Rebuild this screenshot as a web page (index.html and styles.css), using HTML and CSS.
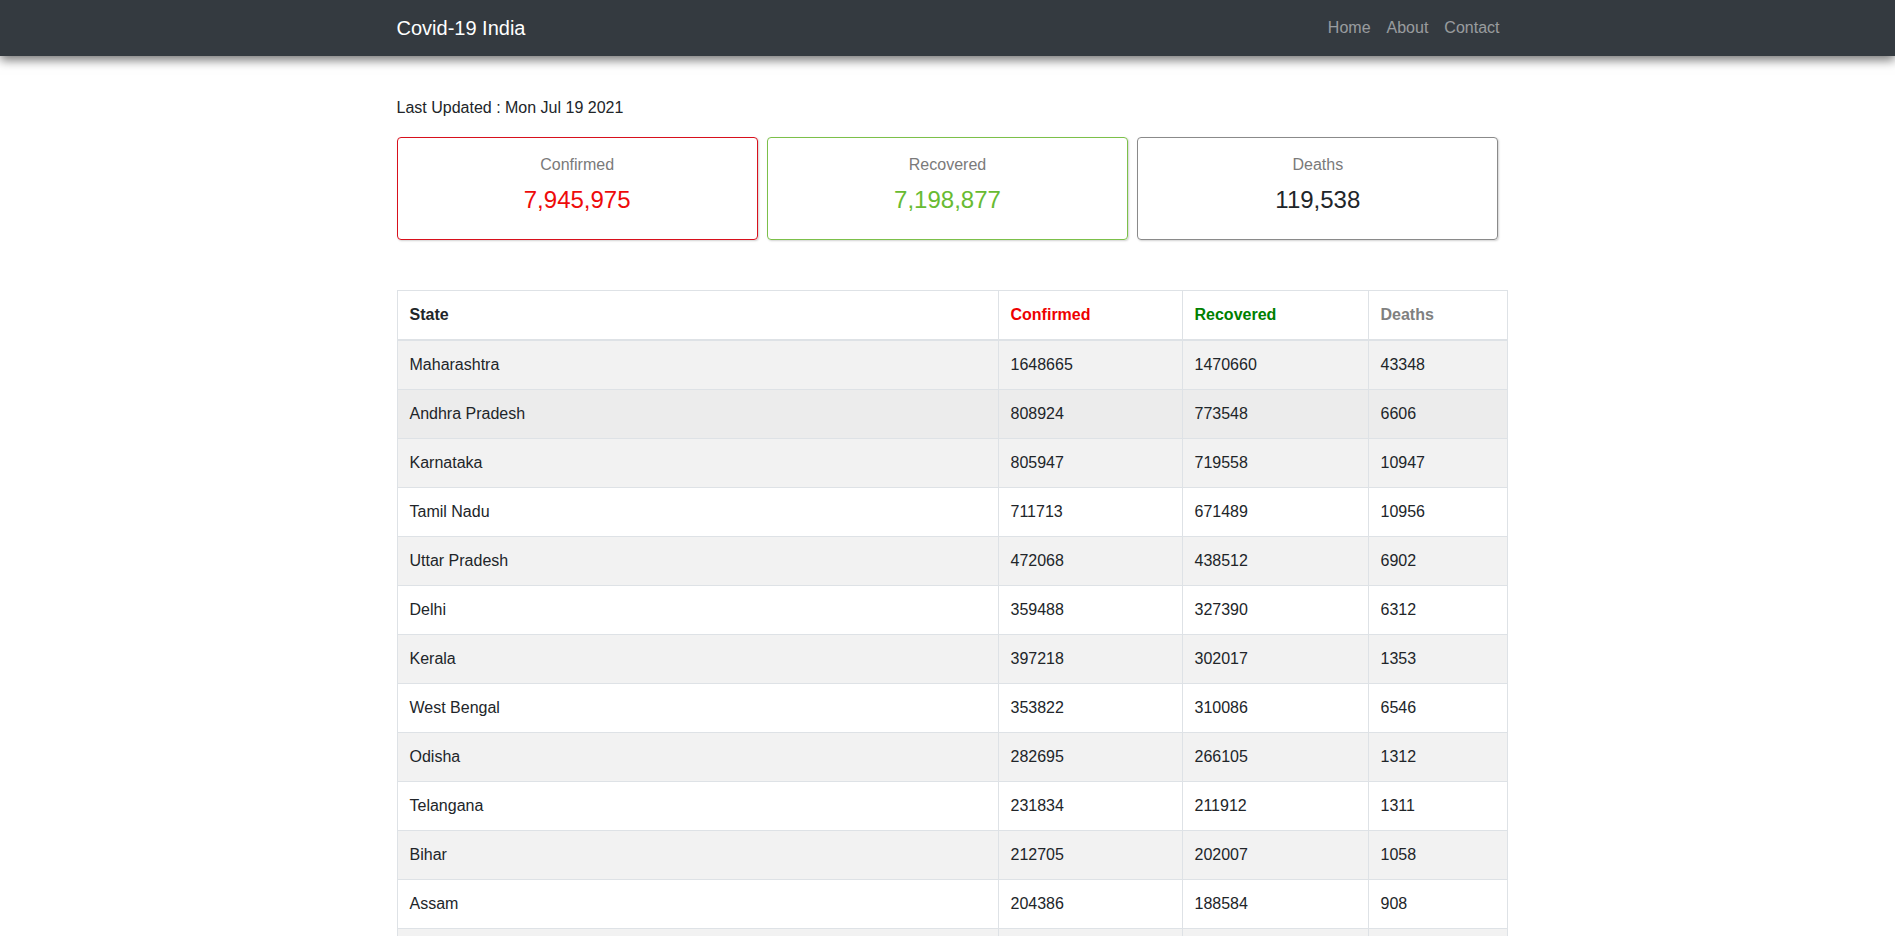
FILE: index.html
```html
<!DOCTYPE html>
<html lang="en">
<head>
<meta charset="utf-8">
<title>Covid-19 India</title>
<link rel="stylesheet" href="styles.css">
</head>
<body>
<nav class="navbar">
  <div class="nav-inner">
    <a class="brand" href="#">Covid-19 India</a>
    <ul class="nav-links">
      <li><a href="#">Home</a></li>
      <li><a href="#">About</a></li>
      <li><a href="#">Contact</a></li>
    </ul>
  </div>
</nav>

<main class="container">
  <p class="updated">Last Updated : Mon Jul 19 2021</p>

  <div class="cards">
    <div class="card card-confirmed">
      <div class="card-label">Confirmed</div>
      <div class="card-value">7,945,975</div>
    </div>
    <div class="card card-recovered">
      <div class="card-label">Recovered</div>
      <div class="card-value">7,198,877</div>
    </div>
    <div class="card card-deaths">
      <div class="card-label">Deaths</div>
      <div class="card-value">119,538</div>
    </div>
  </div>

  <table class="states">
    <colgroup>
      <col class="col-state">
      <col class="col-confirmed">
      <col class="col-recovered">
      <col class="col-deaths">
    </colgroup>
    <thead>
      <tr>
        <th>State</th>
        <th class="h-confirmed">Confirmed</th>
        <th class="h-recovered">Recovered</th>
        <th class="h-deaths">Deaths</th>
      </tr>
    </thead>
    <tbody>
      <tr><td>Maharashtra</td><td>1648665</td><td>1470660</td><td>43348</td></tr>
      <tr class="hovered"><td>Andhra Pradesh</td><td>808924</td><td>773548</td><td>6606</td></tr>
      <tr><td>Karnataka</td><td>805947</td><td>719558</td><td>10947</td></tr>
      <tr><td>Tamil Nadu</td><td>711713</td><td>671489</td><td>10956</td></tr>
      <tr><td>Uttar Pradesh</td><td>472068</td><td>438512</td><td>6902</td></tr>
      <tr><td>Delhi</td><td>359488</td><td>327390</td><td>6312</td></tr>
      <tr><td>Kerala</td><td>397218</td><td>302017</td><td>1353</td></tr>
      <tr><td>West Bengal</td><td>353822</td><td>310086</td><td>6546</td></tr>
      <tr><td>Odisha</td><td>282695</td><td>266105</td><td>1312</td></tr>
      <tr><td>Telangana</td><td>231834</td><td>211912</td><td>1311</td></tr>
      <tr><td>Bihar</td><td>212705</td><td>202007</td><td>1058</td></tr>
      <tr><td>Assam</td><td>204386</td><td>188584</td><td>908</td></tr>
      <tr><td>Rajasthan</td><td>188443</td><td>169981</td><td>1844</td></tr>
      <tr><td>Gujarat</td><td>168708</td><td>151573</td><td>3676</td></tr>
      <tr><td>Chhattisgarh</td><td>172580</td><td>142542</td><td>1900</td></tr>
    </tbody>
  </table>
</main>
</body>
</html>
```

FILE: styles.css
```css
* {
  box-sizing: border-box;
}

html, body {
  margin: 0;
  padding: 0;
  background: #ffffff;
}

body {
  font-family: "Liberation Sans", Arial, sans-serif;
  font-size: 16px;
  line-height: 24px;
  color: #212529;
}

a {
  text-decoration: none;
}

.navbar {
  background: #343a40;
  height: 56px;
  box-shadow: 0 4px 10px rgba(0, 0, 0, 0.55);
  position: relative;
  z-index: 2;
}

.nav-inner {
  width: 1103px;
  margin-left: calc(50% - 551px);
  height: 56px;
  display: flex;
  align-items: center;
  justify-content: space-between;
}

.brand {
  color: #ffffff;
  font-size: 20px;
  line-height: 30px;
}

.nav-links {
  list-style: none;
  margin: 0;
  padding: 0;
  display: flex;
  gap: 16px;
}

.nav-links a {
  color: rgba(255, 255, 255, 0.5);
  font-size: 16px;
  line-height: 24px;
}

.container {
  width: 1110px;
  margin-left: calc(50% - 551px);
  padding-top: 40px;
}

.updated {
  margin: 0 0 17px 0;
  line-height: 24px;
}

.cards {
  display: flex;
  gap: 9px;
  width: 1102px;
}

.card {
  flex: 1 1 0;
  height: 103px;
  border: 1px solid #888;
  border-radius: 4px;
  padding: 15px 15px 0;
  text-align: center;
  box-shadow: 1px 1px 2px rgba(0, 0, 0, 0.18);
}

.card-label {
  color: #7a7a7a;
  font-size: 16px;
  line-height: 24px;
  margin-bottom: 8px;
}

.card-value {
  font-size: 24px;
  line-height: 29px;
}

.card-confirmed {
  border-color: #d8101c;
}

.card-confirmed .card-value {
  color: #ee0a0a;
}

.card-recovered {
  border-color: #7cc04a;
}

.card-recovered .card-value {
  color: #68bb32;
}

.card-deaths {
  border-color: #8a8a8a;
}

.card-deaths .card-value {
  color: #212529;
}

.states {
  margin-top: 50px;
  width: 1110px;
  border-collapse: collapse;
  table-layout: fixed;
  border: 1px solid #dee2e6;
}

.col-state { width: 601px; }
.col-confirmed { width: 184px; }
.col-recovered { width: 186px; }
.col-deaths { width: 139px; }

.states th,
.states td {
  border: 1px solid #dee2e6;
  padding: 12px;
  text-align: left;
  line-height: 24px;
  font-size: 16px;
  vertical-align: top;
}

.states th {
  font-weight: bold;
  color: #212529;
  border-bottom-width: 2px;
}

.states .h-confirmed { color: #ee0000; }
.states .h-recovered { color: #008000; }
.states .h-deaths { color: #808080; }

.states tbody tr:nth-child(odd) {
  background: #f2f2f2;
}

.states tbody tr.hovered {
  background: #ececec;
}
```
